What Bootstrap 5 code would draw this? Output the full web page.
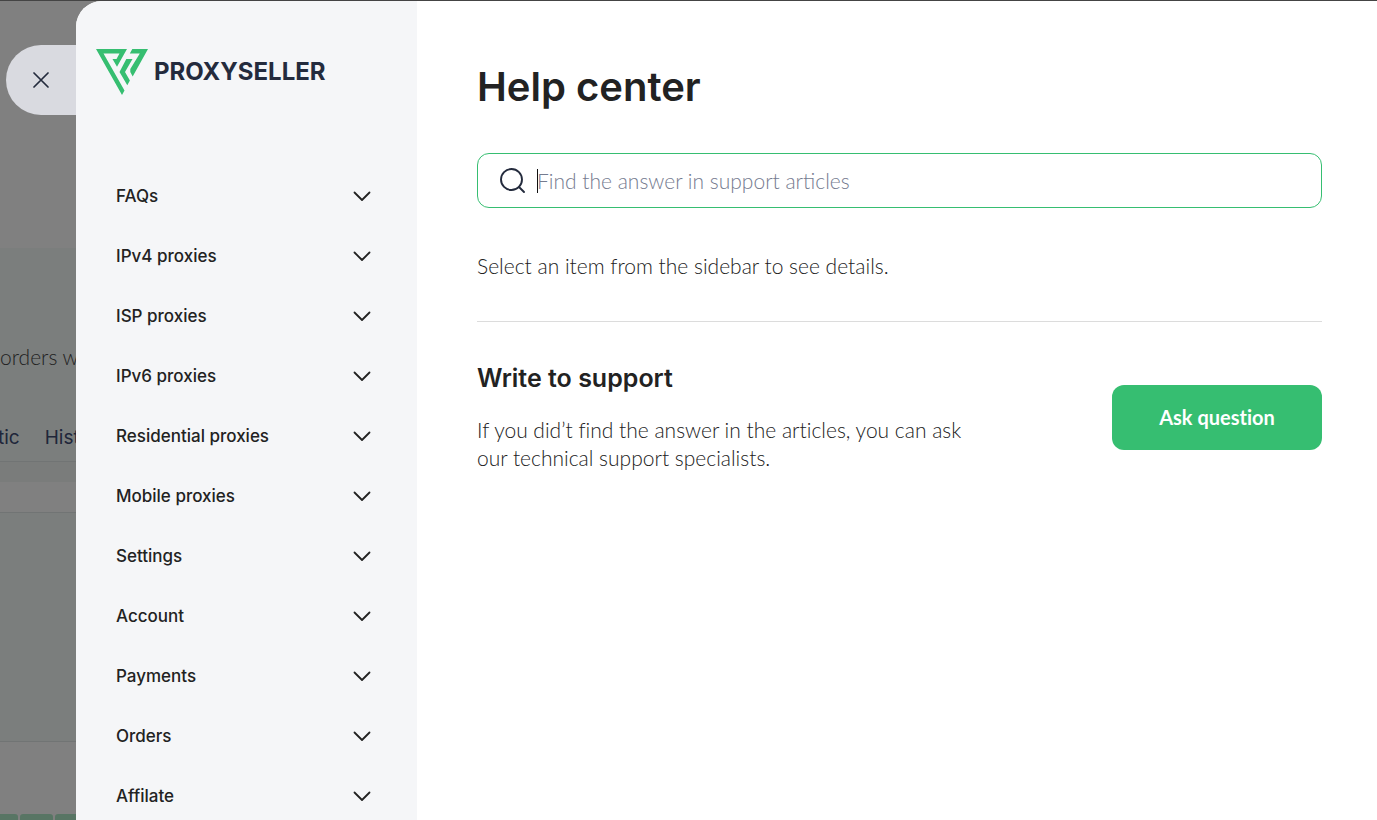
<!DOCTYPE html>
<html lang="en">
<head>
<meta charset="utf-8">
<meta name="viewport" content="width=device-width, initial-scale=1">
<title>Help center</title>
<link href="https://cdn.jsdelivr.net/npm/bootstrap@5.3.0/dist/css/bootstrap.min.css" rel="stylesheet">
<style>
  :root { --green: #36be71; --ink: #222; --navy: #242b3d; }
  body { background: #808080; color: var(--ink); font-family: Lato, "Open Sans", sans-serif; font-size: 21px; font-weight: 300; line-height: 28px; font-variant-ligatures: none; }
  .shell { border-top: 1px solid #444; }
  /* dimmed page left of the drawer */
  .backdrop-strip { width: 76px; white-space: nowrap; }
  .close-zone { height: 247px; padding: 44px 0 0 6px; }
  .close-tab { width: 70px; height: 70px; border: 0; border-radius: 35px 0 0 35px; background: #d9dae0; color: var(--navy); }
  .dim-panel { background: #7b7e7d; }
  .dim-intro { height: 213px; padding-top: 95px; color: #222; }
  .dim-tabs { margin-top: 53px; gap: 25px; color: #20263a; font-family: Inter, sans-serif; font-size: 19px; font-weight: 400; }
  .dim-tabs span:first-child { margin-left: -2px; }
  .dim-gap { height: 21px; border-top: 1px solid #717474; background: #7a7c7b; }
  .dim-head { height: 30px; }
  .dim-table { height: 230px; border-top: 1px solid #717474; border-bottom: 1px solid #717474; }
  .dim-tiles { margin-top: 72px; gap: 2px; }
  .dim-tiles span { width: 33px; height: 20px; border-radius: 3px 3px 0 0; background: #587564; }
  .dim-tiles span:first-child { width: 18px; border-radius: 0 3px 0 0; }
  .drawer { min-width: 0; background: #fff; border-radius: 26px 0 0 0; }
  .side { width: 341px; background: #f5f6f8; }
  .brand { height: 165px; padding: 47px 20px 0; }
  .brand a { gap: 6px; color: var(--navy); font: 700 24px/48px Inter, sans-serif; }
  .topic { height: 60px; padding: 0 46px 0 40px; border: 0; background: none; color: var(--ink); font: 500 17px/24px Inter, sans-serif; }
  .content { min-width: 0; padding: 60px 55px 60px 60px; }
  h1 { margin: 0; font: 600 40px/52px Inter, sans-serif; }
  h2 { margin: 0; font: 600 25px/32px Inter, sans-serif; }
  .search { margin-top: 40px; height: 55px; padding: 0 22px; gap: 12px; border: 1px solid var(--green); border-radius: 12px; }
  .search input { min-width: 0; height: 28px; padding: 0; border: 0; outline: 0; background: none; color: var(--ink); font-weight: 300; caret-color: transparent; }
  .search input::placeholder { color: #757b8f; opacity: 1; }
  .caret-line { width: 1px; height: 24px; margin-right: -13px; background: #111; }
  .hint { margin: 44px 0 41px; }
  .support { border-top: 1px solid #dcdcdc; padding-top: 40px; }
  .support p { max-width: 500px; margin: 22px 0 0; }
  .ask { width: 210px; height: 65px; border-radius: 12px; background: var(--green); color: #fff; font-size: 20px; font-weight: 700; font-variant-ligatures: none; }
  .ask:hover { background: #2eab64; color: #fff; }
</style>
</head>
<body>
<div class="shell d-flex vh-100 overflow-hidden">
  <div class="backdrop-strip flex-shrink-0 overflow-hidden">
    <div class="close-zone">
      <button class="close-tab d-flex align-items-center justify-content-center p-0" type="button" aria-label="Close">
        <svg width="16" height="16" viewBox="0 0 16 16" fill="none" stroke="currentColor" stroke-width="1.7" stroke-linecap="round"><path d="M1 1l14 14M15 1L1 15"/></svg>
      </button>
    </div>
    <div class="dim-panel dim-intro">
      <div>orders w</div>
      <div class="dim-tabs d-flex"><span>tic</span><span>Hist</span></div>
    </div>
    <div class="dim-gap"></div>
    <div class="dim-head"></div>
    <div class="dim-panel dim-table"></div>
    <div class="dim-tiles d-flex"><span class="flex-shrink-0"></span><span class="flex-shrink-0"></span><span class="flex-shrink-0"></span></div>
  </div>

  <div class="drawer d-flex flex-grow-1 overflow-hidden">
    <aside class="side flex-shrink-0">
      <div class="brand">
        <a href="#" class="d-flex text-decoration-none">
          <svg width="52" height="48" viewBox="0 0 52 48" fill="#36be71" aria-hidden="true">
            <path d="M0 1H31L21 18.700L16.500 11H20.500L23.500 5.500H7.500L28.500 42.500L26 47Z"/>
            <path d="M30.300 11H36.500L29 24L33.900 32.500L31.300 37.300L23.500 24Z"/>
            <path d="M36.300 1H52L36.700 28.500L34.300 24V21L43.800 5.500H33.800Z"/>
          </svg>
          <span>PROXYSELLER</span>
        </a>
      </div>
      <nav class="d-flex flex-column" id="topics" aria-label="Help topics">
        <button type="button" class="topic d-flex align-items-center justify-content-between">FAQs<svg width="18" height="11" viewBox="0 0 18 11" fill="none" stroke="currentColor" stroke-width="1.8" stroke-linecap="round" stroke-linejoin="round"><path d="M1.500 1.500L9 9l7.500-7.500"/></svg></button>
        <button type="button" class="topic d-flex align-items-center justify-content-between">IPv4 proxies<svg width="18" height="11" viewBox="0 0 18 11" fill="none" stroke="currentColor" stroke-width="1.8" stroke-linecap="round" stroke-linejoin="round"><path d="M1.500 1.500L9 9l7.500-7.500"/></svg></button>
        <button type="button" class="topic d-flex align-items-center justify-content-between">ISP proxies<svg width="18" height="11" viewBox="0 0 18 11" fill="none" stroke="currentColor" stroke-width="1.8" stroke-linecap="round" stroke-linejoin="round"><path d="M1.500 1.500L9 9l7.500-7.500"/></svg></button>
        <button type="button" class="topic d-flex align-items-center justify-content-between">IPv6 proxies<svg width="18" height="11" viewBox="0 0 18 11" fill="none" stroke="currentColor" stroke-width="1.8" stroke-linecap="round" stroke-linejoin="round"><path d="M1.500 1.500L9 9l7.500-7.500"/></svg></button>
        <button type="button" class="topic d-flex align-items-center justify-content-between">Residential proxies<svg width="18" height="11" viewBox="0 0 18 11" fill="none" stroke="currentColor" stroke-width="1.8" stroke-linecap="round" stroke-linejoin="round"><path d="M1.500 1.500L9 9l7.500-7.500"/></svg></button>
        <button type="button" class="topic d-flex align-items-center justify-content-between">Mobile proxies<svg width="18" height="11" viewBox="0 0 18 11" fill="none" stroke="currentColor" stroke-width="1.8" stroke-linecap="round" stroke-linejoin="round"><path d="M1.500 1.500L9 9l7.500-7.500"/></svg></button>
        <button type="button" class="topic d-flex align-items-center justify-content-between">Settings<svg width="18" height="11" viewBox="0 0 18 11" fill="none" stroke="currentColor" stroke-width="1.8" stroke-linecap="round" stroke-linejoin="round"><path d="M1.500 1.500L9 9l7.500-7.500"/></svg></button>
        <button type="button" class="topic d-flex align-items-center justify-content-between">Account<svg width="18" height="11" viewBox="0 0 18 11" fill="none" stroke="currentColor" stroke-width="1.8" stroke-linecap="round" stroke-linejoin="round"><path d="M1.500 1.500L9 9l7.500-7.500"/></svg></button>
        <button type="button" class="topic d-flex align-items-center justify-content-between">Payments<svg width="18" height="11" viewBox="0 0 18 11" fill="none" stroke="currentColor" stroke-width="1.8" stroke-linecap="round" stroke-linejoin="round"><path d="M1.500 1.500L9 9l7.500-7.500"/></svg></button>
        <button type="button" class="topic d-flex align-items-center justify-content-between">Orders<svg width="18" height="11" viewBox="0 0 18 11" fill="none" stroke="currentColor" stroke-width="1.8" stroke-linecap="round" stroke-linejoin="round"><path d="M1.500 1.500L9 9l7.500-7.500"/></svg></button>
        <button type="button" class="topic d-flex align-items-center justify-content-between">Affilate<svg width="18" height="11" viewBox="0 0 18 11" fill="none" stroke="currentColor" stroke-width="1.8" stroke-linecap="round" stroke-linejoin="round"><path d="M1.500 1.500L9 9l7.500-7.500"/></svg></button>
      </nav>
    </aside>

    <main class="content flex-grow-1">
      <h1>Help center</h1>
      <label class="search d-flex align-items-center">
        <svg class="flex-shrink-0" width="25" height="25" viewBox="0 0 25 25" fill="none" stroke="#242b3d" stroke-width="1.900" stroke-linecap="round" aria-hidden="true"><circle cx="11.500" cy="11.500" r="10.500"/><path d="M19 19l5 5"/></svg>
        <span class="caret-line flex-shrink-0"></span>
        <input class="flex-grow-1" type="text" placeholder="Find the answer in support articles" aria-label="Search support articles">
      </label>
      <p class="hint">Select an item from the sidebar to see details.</p>
      <section class="support d-flex align-items-center justify-content-between gap-4">
        <div>
          <h2>Write to support</h2>
          <p>If you did’t find the answer in the articles, you can ask our technical support specialists.</p>
        </div>
        <button type="button" class="ask btn flex-shrink-0">Ask question</button>
      </section>
    </main>
  </div>
</div>
<script src="https://cdn.jsdelivr.net/npm/bootstrap@5.3.0/dist/js/bootstrap.bundle.min.js"></script>
</body>
</html>
